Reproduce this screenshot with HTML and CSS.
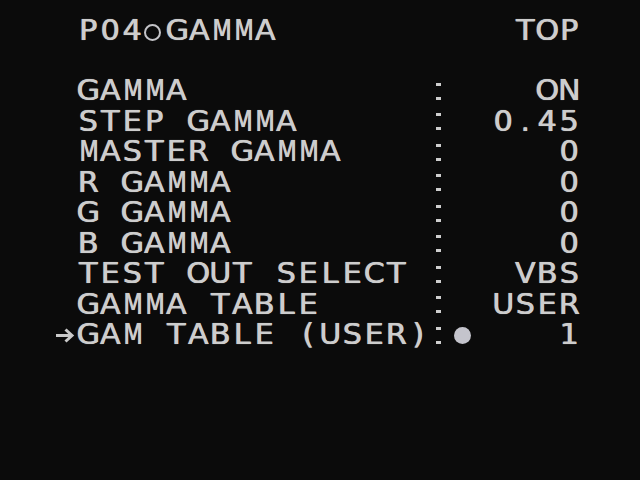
FILE: index.html
```html
<!DOCTYPE html>
<html lang="en">
<head>
  <meta charset="UTF-8" />
  <title>P04 GAMMA</title>
  <link rel="stylesheet" href="styles.css">
</head>
<body>
  <div class="screen">
    <div class="row title">
      <span class="mark"></span>
      <span class="txt">P04</span><span class="ring"></span><span class="txt">GAMMA</span>
      <span class="txt right">TOP</span>
    </div>

    <div class="row"><span class="mark"></span><span class="txt label">GAMMA</span><span class="colon"></span><span class="sel"></span><span class="txt value">ON</span></div>
    <div class="row"><span class="mark"></span><span class="txt label">STEP GAMMA</span><span class="colon"></span><span class="sel"></span><span class="txt value">0.45</span></div>
    <div class="row"><span class="mark"></span><span class="txt label">MASTER GAMMA</span><span class="colon"></span><span class="sel"></span><span class="txt value">0</span></div>
    <div class="row"><span class="mark"></span><span class="txt label">R GAMMA</span><span class="colon"></span><span class="sel"></span><span class="txt value">0</span></div>
    <div class="row"><span class="mark"></span><span class="txt label">G GAMMA</span><span class="colon"></span><span class="sel"></span><span class="txt value">0</span></div>
    <div class="row"><span class="mark"></span><span class="txt label">B GAMMA</span><span class="colon"></span><span class="sel"></span><span class="txt value">0</span></div>
    <div class="row"><span class="mark"></span><span class="txt label">TEST OUT SELECT</span><span class="colon"></span><span class="sel"></span><span class="txt value">VBS</span></div>
    <div class="row"><span class="mark"></span><span class="txt label">GAMMA TABLE</span><span class="colon"></span><span class="sel"></span><span class="txt value">USER</span></div>
    <div class="row">
      <span class="mark">
        <svg width="22" height="30" viewBox="0 0 22 30"><path d="M1 15.5H17M10.5 9.5L17 15.5L10.5 21.5" fill="none" stroke="#cacaca" stroke-width="3"/></svg>
      </span>
      <span class="txt label">GAM TABLE (USER)</span><span class="colon"></span><span class="sel on"></span><span class="txt value">1</span>
    </div>
  </div>

  <script src="script.js"></script>
</body>
</html>
```

FILE: styles.css
```css
body {
  margin: 0;
  background: #0b0b0b;
}

.screen {
  width: 640px;
  height: 480px;
  box-sizing: border-box;
  padding: 16px 0 0 55px;
  font-family: "DejaVu Sans", sans-serif;
  font-size: 28px;
  color: #cdcdcd;
  text-shadow: 0.6px 0 0 #cdcdcd, 0 0 1px rgba(200, 200, 210, 0.6);
}

.row {
  display: flex;
  width: 525px;
  height: 30.5px;
  line-height: 30.5px;
}

.title {
  height: 30px;
  line-height: 30px;
  margin-bottom: 30px;
}

.txt {
  display: flex;
}

.cell,
.mark,
.colon,
.sel,
.ring {
  flex: none;
  width: 22px;
}

.cell {
  display: inline-block;
  text-align: center;
  transform: scaleX(1.08);
}

.cell.wide {
  transform: scaleX(0.8);
}

.label {
  width: 352px;
}

.value {
  flex: 1;
  justify-content: flex-end;
}

.right {
  margin-left: auto;
}

.mark svg {
  display: block;
}

.colon {
  display: flex;
  flex-direction: column;
  align-items: center;
  justify-content: center;
  gap: 11px;
  padding-right: 4px;
  box-sizing: border-box;
}

.colon::before,
.colon::after {
  content: "";
  width: 5px;
  height: 3px;
  background: #cfcfcf;
}

.sel {
  display: flex;
  align-items: center;
  justify-content: center;
}

.sel.on::before {
  content: "";
  width: 17px;
  height: 17px;
  border-radius: 50%;
  background: #c4c4cc;
  margin-top: 1px;
}

.ring {
  display: flex;
  align-items: center;
  padding-left: 1px;
}

.ring::before {
  content: "";
  width: 13px;
  height: 13px;
  border: 2px solid #c4c4c8;
  border-radius: 50%;
  margin-top: 3px;
}
```

FILE: script.js
```js
// split every text run into fixed OSD character cells
document.querySelectorAll('.txt').forEach(el => {
  const chars = [...el.textContent]
  el.textContent = ''
  chars.forEach(ch => {
    const cell = document.createElement('span')
    cell.className = ch === 'M' || ch === 'W' ? 'cell wide' : 'cell'
    cell.textContent = ch === ' ' ? '' : ch
    el.appendChild(cell)
  })
})
```
